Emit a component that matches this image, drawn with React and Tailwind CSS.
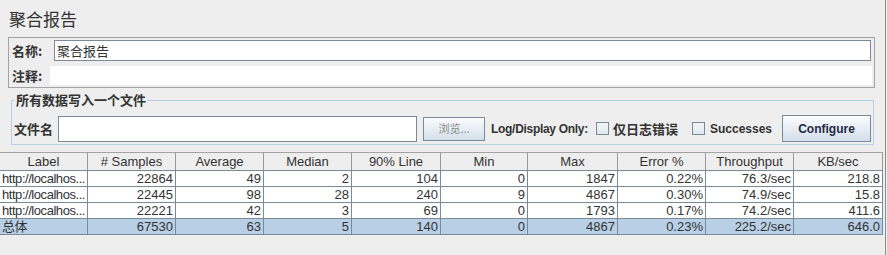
const cols = [
  { name: 'Label', w: 'w-[88px]' },
  { name: '# Samples', w: 'w-[88px]' },
  { name: 'Average', w: 'w-[88px]' },
  { name: 'Median', w: 'w-[88px]' },
  { name: '90% Line', w: 'w-[89px]' },
  { name: 'Min', w: 'w-[87px]' },
  { name: 'Max', w: 'w-[90px]' },
  { name: 'Error %', w: 'w-[88px]' },
  { name: 'Throughput', w: 'w-[88px]' },
  { name: 'KB/sec', w: 'w-[89px]' },
];

const rows = [
  ['http://localhos...', '22864', '49', '2', '104', '0', '1847', '0.22%', '76.3/sec', '218.8'],
  ['http://localhos...', '22445', '98', '28', '240', '9', '4867', '0.30%', '74.9/sec', '15.8'],
  ['http://localhos...', '22221', '42', '3', '69', '0', '1793', '0.17%', '74.2/sec', '411.6'],
  ['总体', '67530', '63', '5', '140', '0', '4867', '0.23%', '225.2/sec', '646.0'],
];

const cjk = "font-['Noto_Sans_CJK_SC',sans-serif]";
const sans = "font-['Liberation_Sans','Noto_Sans_CJK_SC',sans-serif]";

const Checkbox = () => (
  <span className="shrink-0 inline-block w-[13px] h-[13px] border border-[#7a8a99] bg-gradient-to-b from-[#f4f7fa] to-[#dfe7ef]" />
);

export default function App() {
  return (
    <div className={`w-[887px] h-[255px] bg-[#eeeeee] flex overflow-hidden text-[#333] ${sans}`}>
      <div className="w-[885px] shrink-0 flex flex-col">
        {/* Title */}
        <h1 className={`pt-[9px] pl-[9px] text-[17px] leading-[20px] font-normal ${cjk}`}>聚合报告</h1>

        {/* Name / comment panel */}
        <div className="mt-[8px] ml-[8px] w-[867px] border border-[#a3a3a3] p-[2px] flex flex-col">
          <div className="flex items-center h-[21px]">
            <span className={`w-[43px] shrink-0 whitespace-nowrap pl-[1px] text-[13px] font-bold ${cjk}`}>名称:</span>
            <div className={`flex-1 mr-[1px] h-[21px] bg-white border border-[#7a8a99] pl-[2px] text-[13px] leading-[19px] ${cjk}`}>
              聚合报告
            </div>
          </div>
          <div className="flex items-center h-[19px] mt-[5px]">
            <span className={`w-[39px] shrink-0 whitespace-nowrap pl-[1px] text-[13px] font-bold ${cjk}`}>注释:</span>
            <div className="flex-1 h-[19px] bg-white" />
          </div>
        </div>

        {/* Write results to file */}
        <fieldset className="mt-[4px] ml-[11px] w-[862px] border border-[#b8cfe5] pl-[2px] pr-[2px] pt-[7px] pb-[2px]">
          <legend className={`ml-[1px] px-[1px] text-[13px] leading-[16px] font-bold ${cjk}`}>所有数据写入一个文件</legend>
          <div className="flex items-center h-[27px] whitespace-nowrap">
            <span className={`shrink-0 text-[13px] font-bold ${cjk}`}>文件名</span>
            <div className="shrink-0 ml-[5px] w-[359px] h-[26px] bg-white border border-[#7a8a99]" />
            <button className={`shrink-0 ml-[6px] w-[62px] h-[24px] border border-[#7a8a99] bg-gradient-to-b from-[#fbfcfe] to-[#d3dfea] text-[11px] text-[#8a8a8a] ${cjk}`}>
              浏览...
            </button>
            <span className="shrink-0 ml-[6px] text-[12px] font-bold tracking-[-0.3px]">Log/Display Only:</span>
            <span className="shrink-0 ml-[8px] flex"><Checkbox /></span>
            <span className={`shrink-0 ml-[4px] text-[13px] font-bold ${cjk}`}>仅日志错误</span>
            <span className="shrink-0 ml-[14px] flex"><Checkbox /></span>
            <span className="shrink-0 ml-[5px] text-[12px] font-bold">Successes</span>
            <button className="shrink-0 ml-[10px] w-[89px] h-[27px] border border-[#7a8a99] bg-gradient-to-b from-[#fbfcfe] to-[#d3dfea] text-[12px] font-bold text-[#1f2a44]">
              Configure
            </button>
          </div>
        </fieldset>

        {/* Results table */}
        <div className="mt-[7px] w-[883px] border-t border-[#a3a3a3] text-[13px]">
          <div className="flex h-[18px] bg-[#eeeeee] border-b border-[#7a8a99]">
            {cols.map((c) => (
              <div key={c.name} className={`${c.w} shrink-0 border-r border-[#999] text-center leading-[17px] whitespace-nowrap`}>
                {c.name}
              </div>
            ))}
          </div>
          {rows.map((r, i) => (
            <div
              key={i}
              className={`flex h-[16px] border-b border-[#7a8a99] ${i === rows.length - 1 ? 'bg-[#b8cfe5]' : 'bg-white'}`}
            >
              {r.map((v, j) => (
                <div
                  key={j}
                  className={`${cols[j].w} shrink-0 border-r border-[#7a8a99] leading-[15px] whitespace-nowrap overflow-hidden ${
                    j === 0 ? 'pl-[2px] text-left tracking-[-0.45px]' : 'pr-[2px] text-right'
                  }`}
                >
                  {v}
                </div>
              ))}
            </div>
          ))}
        </div>
      </div>
      <div className="w-px shrink-0 bg-[#8c8c8c]" />
    </div>
  );
}
